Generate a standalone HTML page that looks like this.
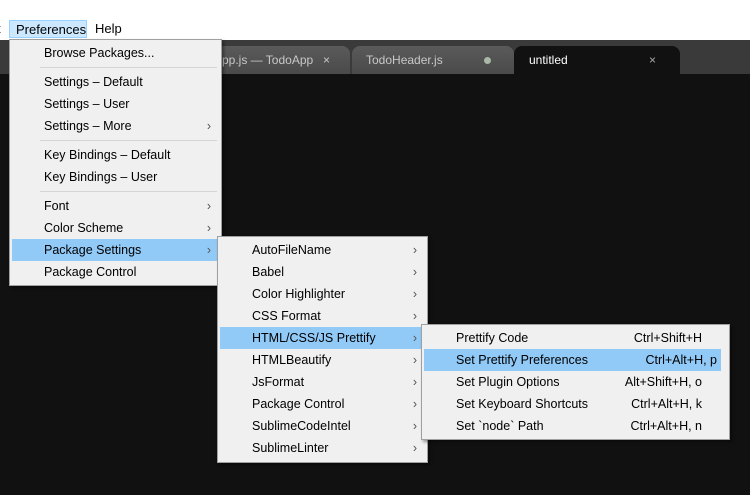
<!DOCTYPE html>
<html><head><style>
body{margin:0;width:750px;height:495px;overflow:hidden;background:#111;font-family:"Liberation Sans","Noto Sans CJK TC",sans-serif;font-size:12.5px;position:relative}
.bar{position:absolute;left:0;top:0;width:750px;height:40px;background:#fff}
.mi{position:absolute;top:20px;height:18px;line-height:18px;color:#000;font-size:13px}
.tabs{position:absolute;left:0;top:40px;width:750px;height:34px;background:#3a3a3a}
.tab{position:absolute;top:6px;height:28px;background:linear-gradient(#5a5a5a,#4a4a4a);border-radius:8px 8px 0 0;color:#c8c8c8;line-height:28px;font-size:12px}
.menu{position:absolute;background:#f0f0f0;border:1px solid #a0a0a0;box-shadow:2px 2px 3px rgba(0,0,0,.4)}
.it{position:absolute;left:2px;right:2px;height:22px;line-height:22px;color:#000;font-size:12.5px}
.it.h{background:#91c9f7}
.it .t{position:absolute}
.it .a{position:absolute;right:8px;top:0;color:#555}
.it .k{position:absolute;right:8px}
.sep{position:absolute;height:1px;background:#d5d5d5;right:4px}
</style></head><body>
<div class="bar"></div>
<div class="mi" style="left:-3px">t</div>
<div class="mi" style="left:9px;width:78px;top:20px;background:#cce8ff;border:1px solid #99d1ff;box-sizing:border-box;padding-left:6px">Preferences</div>
<div class="mi" style="left:95px">Help</div>
<div class="tabs">
 <div class="tab" style="left:200px;width:150px"><span style="position:absolute;left:22px">pp.js — TodoApp</span><span style="position:absolute;left:123px">×</span></div>
 <div class="tab" style="left:352px;width:162px"><span style="position:absolute;left:14px">TodoHeader.js</span><span style="position:absolute;left:132px;top:11px;width:7px;height:7px;border-radius:50%;background:#aab8a8"></span></div>
 <div class="tab" style="left:514px;width:166px;background:#111;color:#fff"><span style="position:absolute;left:15px">untitled</span><span style="position:absolute;left:135px;color:#aaa">×</span></div>
</div>
<div class="menu" style="left:9px;top:39px;width:211px;height:245px">
 <div class="it" style="top:2px"><span class="t" style="left:32px">Browse Packages...</span></div>
 <div class="sep" style="left:30px;top:27px"></div>
 <div class="it" style="top:31px"><span class="t" style="left:32px">Settings – Default</span></div>
 <div class="it" style="top:53px"><span class="t" style="left:32px">Settings – User</span></div>
 <div class="it" style="top:75px"><span class="t" style="left:32px">Settings – More</span><span class="a">›</span></div>
 <div class="sep" style="left:30px;top:100px"></div>
 <div class="it" style="top:104px"><span class="t" style="left:32px">Key Bindings – Default</span></div>
 <div class="it" style="top:126px"><span class="t" style="left:32px">Key Bindings – User</span></div>
 <div class="sep" style="left:30px;top:151px"></div>
 <div class="it" style="top:155px"><span class="t" style="left:32px">Font</span><span class="a">›</span></div>
 <div class="it" style="top:177px"><span class="t" style="left:32px">Color Scheme</span><span class="a">›</span></div>
 <div class="it h" style="top:199px"><span class="t" style="left:32px">Package Settings</span><span class="a">›</span></div>
 <div class="it" style="top:221px"><span class="t" style="left:32px">Package Control</span></div>
</div>
<div class="menu" style="left:217px;top:236px;width:209px;height:225px">
 <div class="it" style="top:2px"><span class="t" style="left:32px">AutoFileName</span><span class="a">›</span></div>
 <div class="it" style="top:24px"><span class="t" style="left:32px">Babel</span><span class="a">›</span></div>
 <div class="it" style="top:46px"><span class="t" style="left:32px">Color Highlighter</span><span class="a">›</span></div>
 <div class="it" style="top:68px"><span class="t" style="left:32px">CSS Format</span><span class="a">›</span></div>
 <div class="it h" style="top:90px"><span class="t" style="left:32px">HTML/CSS/JS Prettify</span><span class="a">›</span></div>
 <div class="it" style="top:112px"><span class="t" style="left:32px">HTMLBeautify</span><span class="a">›</span></div>
 <div class="it" style="top:134px"><span class="t" style="left:32px">JsFormat</span><span class="a">›</span></div>
 <div class="it" style="top:156px"><span class="t" style="left:32px">Package Control</span><span class="a">›</span></div>
 <div class="it" style="top:178px"><span class="t" style="left:32px">SublimeCodeIntel</span><span class="a">›</span></div>
 <div class="it" style="top:200px"><span class="t" style="left:32px">SublimeLinter</span><span class="a">›</span></div>
</div>
<div class="menu" style="left:421px;top:324px;width:307px;height:114px">
 <div class="it" style="top:2px"><span class="t" style="left:32px">Prettify Code</span><span class="k" style="right:25px">Ctrl+Shift+H</span></div>
 <div class="it h" style="top:24px;right:8px"><span class="t" style="left:32px">Set Prettify Preferences</span><span class="k" style="right:4px">Ctrl+Alt+H, p</span></div>
 <div class="it" style="top:46px"><span class="t" style="left:32px">Set Plugin Options</span><span class="k" style="right:25px">Alt+Shift+H, o</span></div>
 <div class="it" style="top:68px"><span class="t" style="left:32px">Set Keyboard Shortcuts</span><span class="k" style="right:25px">Ctrl+Alt+H, k</span></div>
 <div class="it" style="top:90px"><span class="t" style="left:32px">Set `node` Path</span><span class="k" style="right:25px">Ctrl+Alt+H, n</span></div>
</div>
</body></html>
